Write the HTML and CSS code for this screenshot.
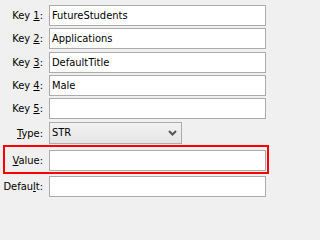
FILE: index.html
```html
<!DOCTYPE html>
<html>
<head>
<meta charset="utf-8">
<link rel="stylesheet" href="styles.css">
</head>
<body>
<div class="form">
  <div class="row r1"><span class="label">Key <u>1</u>:</span><div class="field">FutureStudents</div></div>
  <div class="row r2"><span class="label">Key <u>2</u>:</span><div class="field">Applications</div></div>
  <div class="row r3"><span class="label">Key <u>3</u>:</span><div class="field">DefaultTitle</div></div>
  <div class="row r4"><span class="label">Key <u>4</u>:</span><div class="field">Male</div></div>
  <div class="row r5"><span class="label">Key <u>5</u>:</span><div class="field"></div></div>
  <div class="row r6"><span class="label"><u>T</u>ype:</span>
    <div class="select"><span>STR</span>
      <svg class="chev" width="9" height="6" viewBox="0 0 9 6"><path d="M1 1 L4.5 4.5 L8 1" fill="none" stroke="#555" stroke-width="2"/></svg>
    </div>
  </div>
  <div class="highlight">
    <div class="row"><span class="label"><u>V</u>alue:</span><div class="field"></div></div>
  </div>
  <div class="row r8"><span class="label">Defau<u>l</u>t:</span><div class="field"></div></div>
</div>
</body>
</html>
```
FILE: styles.css
```css
html, body {
  margin: 0;
  padding: 0;
  background: #f0f0f0;
}
.form {
  padding-top: 5px;
  font-family: "DejaVu Sans Condensed", "DejaVu Sans", sans-serif;
  font-size: 11px;
  color: #000;
}
.row {
  display: flex;
  align-items: center;
  height: 21px;
}
.label {
  width: 44px;
  box-sizing: border-box;
  padding-right: 1px;
  margin-right: 5px;
  text-align: right;
  white-space: nowrap;
}
.field {
  width: 217px;
  height: 21px;
  box-sizing: border-box;
  border: 1px solid #ababab;
  background: #fff;
  padding: 0 2px;
  line-height: 19px;
  color: #000;
  white-space: nowrap;
}
.r2 { margin-top: 2px; }
.r3 { margin-top: 3px; }
.r4 { margin-top: 2px; }
.r5 { margin-top: 2px; }
.r6 { margin-top: 3px; height: 22px; }
.select {
  width: 133px;
  height: 22px;
  box-sizing: border-box;
  border: 1px solid #acacac;
  background: linear-gradient(#f2f2f2, #e5e5e5);
  padding: 0 4px 0 2px;
  display: flex;
  align-items: center;
  justify-content: space-between;
  line-height: 20px;
}
.chev {
  display: block;
}
.highlight {
  margin-top: 1px;
  margin-left: 3px;
  width: 266px;
  height: 29px;
  box-sizing: border-box;
  border: 2px solid #ff0000;
  padding-top: 3px;
}
.highlight .label {
  width: 39px;
}
.r8 { margin-top: 2px; }
```
